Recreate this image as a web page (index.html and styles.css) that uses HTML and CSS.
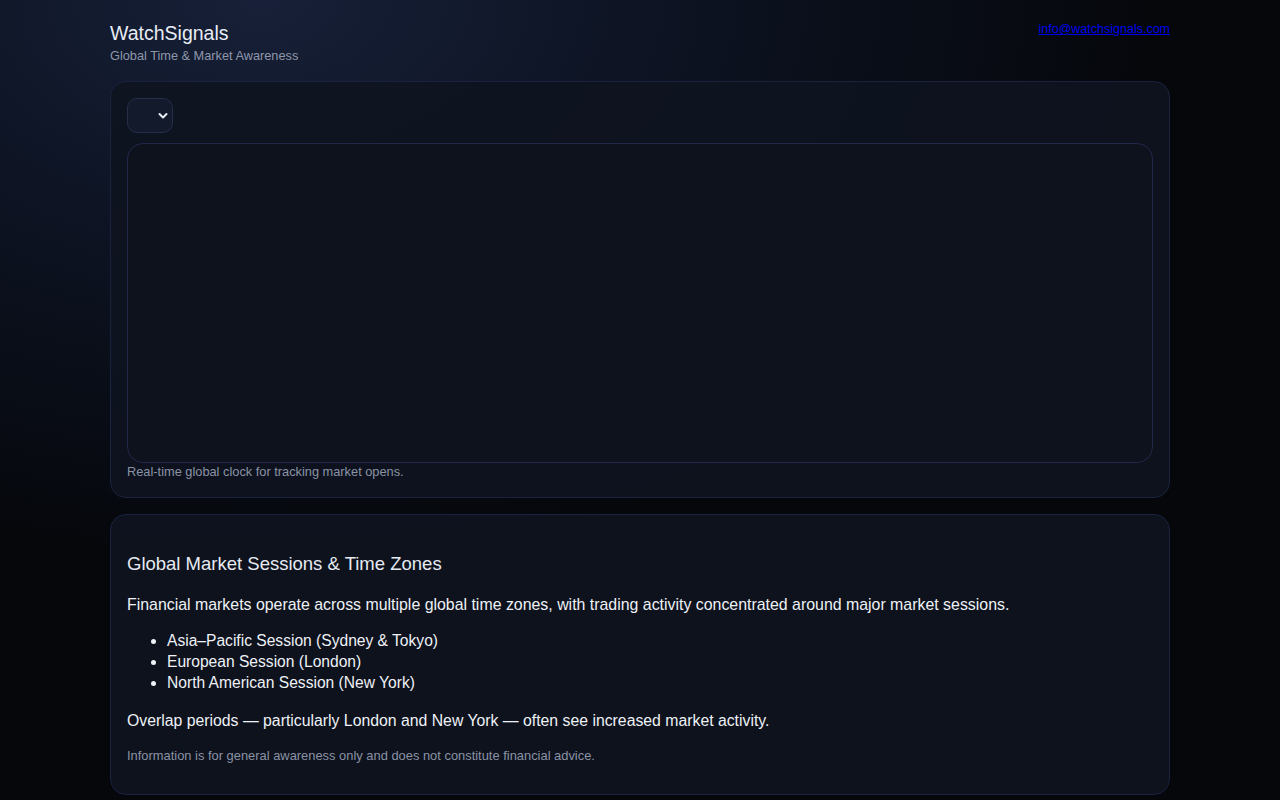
FILE: index.html
```html
<!DOCTYPE html>
<html lang="en">
<head>
<meta charset="utf-8">
<title>WatchSignals</title>
<link rel="stylesheet" href="styles.css">
</head>
<body>
<div class="page">
  <header class="site-header">
    <div class="brand">
      <div class="brand-title">WatchSignals</div>
      <div class="brand-sub">Global Time &amp; Market Awareness</div>
    </div>
    <a class="contact" href="mailto:info@watchsignals.com">info@watchsignals.com</a>
  </header>

  <section class="card clock-card">
    <div class="select-wrap">
      <select class="zone-select" aria-label="Time zone"></select>
      <svg class="chev" width="10" height="8" viewBox="0 0 10 8"><path d="M1.5 2 L5 5.5 L8.5 2" fill="none" stroke="#e8ecf4" stroke-width="2" stroke-linecap="round" stroke-linejoin="round"/></svg>
    </div>
    <div class="clock-canvas"></div>
    <p class="caption">Real-time global clock for tracking market opens.</p>
  </section>

  <section class="card info-card">
    <h2>Global Market Sessions &amp; Time Zones</h2>
    <p class="lead">Financial markets operate across multiple global time zones, with trading activity concentrated around major market sessions.</p>
    <ul>
      <li>Asia–Pacific Session (Sydney &amp; Tokyo)</li>
      <li>European Session (London)</li>
      <li>North American Session (New York)</li>
    </ul>
    <p class="overlap">Overlap periods — particularly London and New York — often see increased market activity.</p>
    <p class="note">Information is for general awareness only and does not constitute financial advice.</p>
  </section>
</div>
</body>
</html>
```

FILE: styles.css
```css
html, body {
  margin: 0;
  padding: 0;
}
body {
  min-height: 800px;
  font-family: "Liberation Sans", Arial, sans-serif;
  color: #e6eaf2;
  background-color: #05070b;
  background-image: radial-gradient(ellipse 900px 560px at 260px 0px, #172038 0%, #0d1322 45%, #05070b 100%);
  background-repeat: no-repeat;
}
.page {
  width: 1060px;
  margin: 0 auto;
  padding-top: 21px;
}
.site-header {
  display: flex;
  justify-content: space-between;
  align-items: flex-start;
  height: 60px;
}
.brand-title {
  font-size: 19.5px;
  line-height: 24px;
  color: #e8ecf4;
}
.brand-sub {
  font-size: 12.75px;
  line-height: 21px;
  color: #8e97aa;
}
.contact {
  font-size: 12.5px;
  line-height: 14px;
  margin-top: 1px;
  color: #0000ee;
}
.card {
  background: rgba(14, 19, 31, 0.92);
  border: 1px solid #1b2240;
  border-radius: 16px;
  padding: 16px;
}
.clock-card {
  padding-bottom: 17px;
}
.select-wrap {
  position: relative;
  width: 46px;
  height: 35px;
}
.zone-select {
  appearance: none;
  -webkit-appearance: none;
  width: 46px;
  height: 35px;
  box-sizing: border-box;
  border: 1px solid #262e4a;
  border-radius: 10px;
  background: #121a2c;
  color: #e6eaf2;
  margin: 0;
}
.chev {
  position: absolute;
  left: 31px;
  top: 14px;
  pointer-events: none;
}
.clock-canvas {
  margin-top: 10px;
  height: 318px;
  border: 1px solid #212849;
  border-radius: 16px;
  background: #0d121d;
}
.caption {
  margin: 1px 0 0;
  font-size: 12.8px;
  line-height: 16px;
  color: #8b93a5;
}
.info-card {
  margin-top: 16px;
  margin-bottom: 20px;
  padding-top: 16px;
  padding-bottom: 14px;
}
.info-card h2 {
  margin: 22px 0 19px;
  font-size: 18.5px;
  line-height: 22px;
  font-weight: normal;
  color: #e6eaf2;
}
.info-card p {
  margin: 0 0 16px;
  font-size: 15.8px;
  line-height: 21px;
  color: #eef1f6;
}
.info-card p.lead {
  font-size: 15.9px;
  margin-bottom: 15px;
}
.info-card ul {
  margin: 0 0 17px;
  padding-left: 40px;
  font-size: 15.6px;
  line-height: 21px;
  color: #eef1f6;
}
.info-card p.overlap {
  margin-bottom: 17px;
}
.info-card p.note {
  font-size: 12.9px;
  line-height: 16px;
  color: #8b93a5;
  margin-bottom: 16px;
}
```
